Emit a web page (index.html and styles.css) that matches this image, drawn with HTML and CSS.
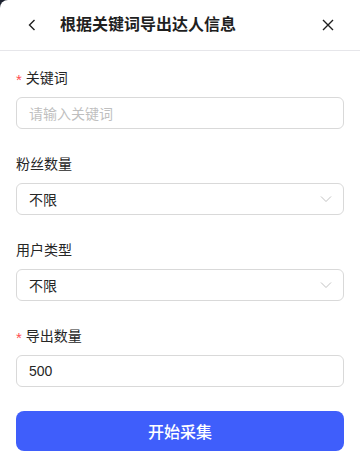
FILE: index.html
```html
<!DOCTYPE html>
<html lang="zh">
<head>
<meta charset="utf-8">
<link rel="stylesheet" href="styles.css">
</head>
<body>
<div class="panel">
  <div class="header">
    <span class="back">
      <svg width="10" height="12" viewBox="0 0 10 12"><path d="M7.5 1 L2.5 6 L7.5 11" fill="none" stroke="#1f1f1f" stroke-width="1.4"/></svg>
    </span>
    <span class="title">根据关键词导出达人信息</span>
    <span class="close">
      <svg width="12" height="12" viewBox="0 0 12 12"><path d="M1 1 L11 11 M11 1 L1 11" fill="none" stroke="#1f1f1f" stroke-width="1.4"/></svg>
    </span>
  </div>
  <div class="form">
    <div class="item">
      <div class="label"><span class="req">*</span>关键词</div>
      <div class="control"><span class="placeholder">请输入关键词</span></div>
    </div>
    <div class="item">
      <div class="label">粉丝数量</div>
      <div class="control select"><span>不限</span>
        <svg width="12" height="8" viewBox="0 0 12 8"><path d="M1 1.5 L6 6.5 L11 1.5" fill="none" stroke="#c2c2c2" stroke-width="1"/></svg>
      </div>
    </div>
    <div class="item">
      <div class="label">用户类型</div>
      <div class="control select"><span>不限</span>
        <svg width="12" height="8" viewBox="0 0 12 8"><path d="M1 1.5 L6 6.5 L11 1.5" fill="none" stroke="#c2c2c2" stroke-width="1"/></svg>
      </div>
    </div>
    <div class="item">
      <div class="label"><span class="req">*</span>导出数量</div>
      <div class="control"><span>500</span></div>
    </div>
    <button class="submit">开始采集</button>
  </div>
</div>
</body>
</html>
```
FILE: styles.css
```css
html, body {
  margin: 0;
  padding: 0;
  background: #1c2230;
  height: 100%;
}
body {
  font-family: "Liberation Sans", "Noto Sans CJK SC", sans-serif;
}
.panel {
  background: #ffffff;
  border-top-left-radius: 8px;
  min-height: 460px;
  width: 360px;
}
.header {
  height: 50px;
  border-bottom: 1px solid #e6e6ea;
  display: flex;
  align-items: center;
  padding: 0 26px 0 27px;
}
.back {
  display: flex;
  width: 33px;
}
.title {
  flex: 1;
  font-size: 16px;
  font-weight: 700;
  color: #1f1f1f;
  line-height: 22px;
}
.close {
  display: flex;
}
.form {
  padding: 16px 16px 0;
  display: flex;
  flex-direction: column;
}
.item {
  margin-bottom: 24px;
}
.label {
  height: 22px;
  line-height: 22px;
  font-size: 14px;
  color: #262626;
  margin-bottom: 8px;
  display: flex;
  align-items: center;
}
.req {
  color: #ff4d4f;
  font-size: 15px;
  margin-right: 4px;
  position: relative;
  top: 2px;
}
.control {
  height: 32px;
  box-sizing: border-box;
  border: 1px solid #d9d9d9;
  border-radius: 6px;
  display: flex;
  align-items: center;
  padding: 0 11px 0 12px;
  font-size: 14px;
  color: #262626;
}
.placeholder {
  color: #bfbfbf;
}
.select {
  justify-content: space-between;
}
.submit {
  height: 40px;
  border: none;
  border-radius: 8px;
  background: #3f5efb;
  color: #ffffff;
  font-size: 16px;
  font-weight: 500;
  font-family: "Liberation Sans", "Noto Sans CJK SC", sans-serif;
  padding: 0;
}
```
